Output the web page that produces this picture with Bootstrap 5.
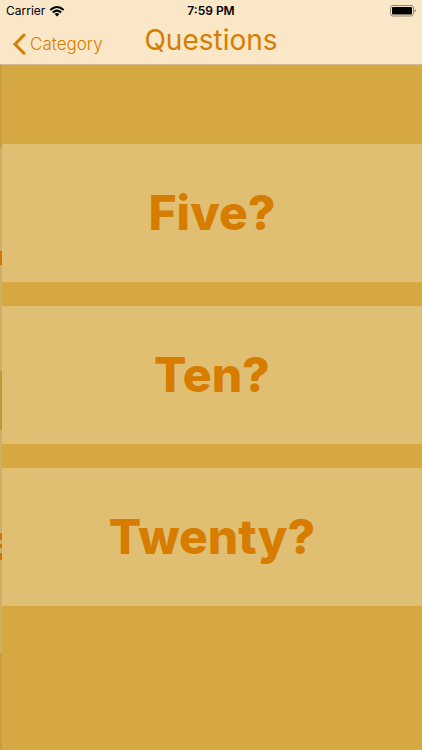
<!DOCTYPE html>
<html lang="en">
<head>
<meta charset="utf-8">
<meta name="viewport" content="width=device-width, initial-scale=1">
<title>Questions</title>
<link href="https://cdn.jsdelivr.net/npm/bootstrap@5.3.0/dist/css/bootstrap.min.css" rel="stylesheet">
<style>
body{font-family:Inter,"Liberation Sans",sans-serif;background:#d6a842;color:#000}
.three-cols{display:grid;grid-template-columns:1fr auto 1fr;align-items:center}
.top-area{background:#f9e7c8;border-bottom:1px solid #d0b98c}
.status-row{height:22px;padding:0 6px;font-size:12px;line-height:22px}
.nav-row{height:42px;padding:0 12px}
.back-link,.screen-title{color:#d67d00}
.back-link{font-size:17px;line-height:42px;gap:4px;font-weight:300}
.screen-title{font-size:28px;line-height:36px;font-weight:400;padding-bottom:8px}
/* edge of the previous screen, still visible beside this one */
.previous-edge{width:2px;background:
 linear-gradient(#d0770a,#d0770a) 0 186px/2px 14px no-repeat,
 linear-gradient(#d0770a,#d0770a) 0 468px/2px 7px no-repeat,
 linear-gradient(#d0770a,#d0770a) 0 479px/2px 4px no-repeat,
 linear-gradient(#d0770a,#d0770a) 0 488px/2px 7px no-repeat,
 linear-gradient(#c69d42 83px,#cfaf68 83px 306px,#c1983f 306px 365px,#cfaf68 365px 588px,#c69d42 588px)}
.choices{padding-top:79px;gap:24px}
.choice{height:138px;background:#e0bf73;color:#d67d00;font-size:48px;line-height:60px;font-weight:800}
</style>
<script src="https://cdn.jsdelivr.net/npm/bootstrap@5.3.0/dist/js/bootstrap.bundle.min.js"></script>
</head>
<body class="min-vh-100 d-flex flex-column">
<header class="top-area">
  <div class="status-row three-cols">
    <div class="d-flex align-items-center gap-1">
      <span>Carrier</span>
      <svg width="16" height="12" viewBox="0 0 16 12" fill="none" stroke="#000" stroke-width="2" aria-label="Wi-Fi" role="img"><path d="M1.3 5Q8-.9 14.7 5M3.8 7.4Q8 3.8 12.2 7.4"/><path d="M5.6 9Q8 7.2 10.4 9L8 11.4Z" fill="#000" stroke="none"/></svg>
    </div>
    <span class="fw-semibold">7:59 PM</span>
    <svg class="ms-auto" width="26" height="12" viewBox="0 0 26 12" aria-label="Battery full" role="img"><rect x=".5" y=".5" width="23" height="10.5" rx="2.5" fill="none" stroke="#8f8674"/><rect x="2" y="2" width="20" height="7.5" rx="1" fill="#000"/><path d="M24.7 4v3.6q1.3-.6 1.3-1.8T24.7 4" fill="#8f8674"/></svg>
  </div>
  <nav class="nav-row three-cols">
    <a href="#" class="back-link d-flex align-items-center text-decoration-none">
      <svg width="14" height="22" viewBox="0 0 14 22" fill="none" stroke="currentColor" stroke-width="3" stroke-linecap="round" aria-hidden="true"><path d="M12 2 3 11.2 12 20.3"/></svg>
      <span>Category</span>
    </a>
    <h1 class="screen-title m-0">Questions</h1>
  </nav>
</header>
<div class="d-flex flex-grow-1">
  <div class="previous-edge flex-shrink-0" aria-hidden="true"></div>
  <main class="choices flex-grow-1 d-flex flex-column">
    <button type="button" class="choice btn rounded-0 border-0 w-100 p-0">Five?</button>
    <button type="button" class="choice btn rounded-0 border-0 w-100 p-0">Ten?</button>
    <button type="button" class="choice btn rounded-0 border-0 w-100 p-0">Twenty?</button>
  </main>
</div>
</body>
</html>
